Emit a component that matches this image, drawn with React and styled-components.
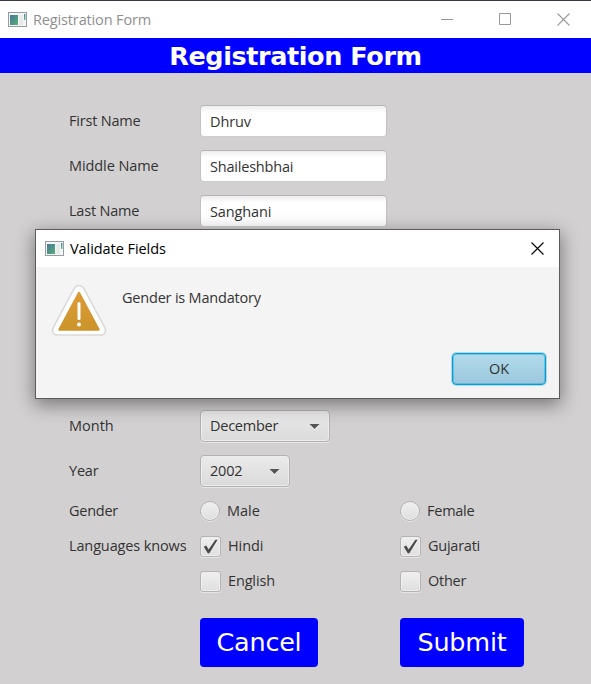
import React from 'react';
import styled, { createGlobalStyle } from 'styled-components';

const Global = createGlobalStyle`
  * { box-sizing: border-box; }
  body { margin: 0; overflow: hidden; }
`;

const Window = styled.div`
  position: relative;
  width: 591px;
  height: 684px;
  background: #d2d0d1;
  border-top: 1px solid #3b3945;
  font-family: 'Open Sans', 'Noto Sans', sans-serif;
  font-size: 14.5px;
  color: #333;
  white-space: nowrap;
`;

const TitleBar = styled.header`
  display: flex;
  align-items: center;
  height: 37px;
  padding: 0 21px 0 8px;
  background: #fff;
  color: ${(p) => (p.$active ? '#000' : '#8f8f8f')};
  svg { flex: none; display: block; }
`;

const WindowTitle = styled.span`
  margin-left: 6px;
  flex: 1;
  line-height: 20px;
  letter-spacing: ${(p) => p.$ls || 0}px;
`;

const Controls = styled.div`
  display: flex;
  gap: 45px;
`;

const Banner = styled.h1`
  height: 35px;
  margin: 0;
  padding-top: 1px;
  background: #00f;
  color: #fff;
  font: bold 25.5px/35px 'DejaVu Sans', sans-serif;
  letter-spacing: -0.42px;
  text-align: center;
`;

const Form = styled.form`
  display: grid;
  grid-template-columns: 131px 200px 1fr;
  grid-template-rows: 32px 32px 32px 157px 32px 32px 22px 22px 22px 62px;
  row-gap: 13px;
  align-items: center;
  justify-items: start;
  padding: 32px 0 0 69px;
`;

const Text = styled.span`
  line-height: 20px;
  letter-spacing: ${(p) => p.$ls || 0}px;
`;

const Label = styled(Text)`
  grid-column: 1;
`;

const Spacer = styled.div`
  grid-column: 1 / -1;
`;

const Field = styled.div`
  display: flex;
  align-items: center;
  width: 187px;
  height: 32px;
  padding: 1px 9px 0;
  border: 1px solid #c3c1c2;
  border-top-color: #b6b4b5;
  border-bottom-color: #cfcdce;
  border-radius: 4px;
  background: linear-gradient(#eee, #fff 7px);
`;

const Combo = styled.div`
  display: flex;
  align-items: center;
  justify-content: space-between;
  width: ${(p) => p.$w}px;
  height: 32px;
  padding: 0 9px 0 9px;
  border: 1px solid #b3b1b2;
  border-radius: 4px;
  background: linear-gradient(#ebebeb, #dadada);
  box-shadow: inset 0 0 0 1px #ededed, 0 1px 0 #e8e7e7;
`;

const Option = styled.label`
  display: flex;
  align-items: center;
  gap: 7px;
  height: 22px;
`;

const Box = styled.span`
  display: flex;
  align-items: center;
  justify-content: center;
  width: ${(p) => (p.$round ? 20 : 21)}px;
  height: ${(p) => (p.$round ? 20 : 21)}px;
  border: 1px solid #b5b3b4;
  border-radius: ${(p) => (p.$round ? '50%' : '3px')};
  background: linear-gradient(#efefef, #dfdfdf);
  box-shadow: inset 0 0 0 1px #efefef, 0 1px 0 #e8e7e7;
`;

const Action = styled.button`
  grid-column: ${(p) => p.$col};
  align-self: end;
  width: ${(p) => p.$w}px;
  height: 49px;
  padding: 0 0 2px;
  border: 0;
  border-radius: 4px;
  background: #00f;
  color: #fff;
  font: 25.5px/46px 'DejaVu Sans', sans-serif;
  letter-spacing: -0.25px;
`;

const Dialog = styled.section`
  position: absolute;
  left: 35px;
  top: 228px;
  width: 525px;
  height: 170px;
  border: 1px solid #5c5c5c;
  background: #f4f4f4;
  box-shadow: 0 5px 17px 1px rgba(0, 0, 0, 0.42);
  ${TitleBar} { padding: 0 15px 0 9px; }
`;

const Message = styled.div`
  display: flex;
  align-items: flex-start;
  gap: 14px;
  height: 86px;
  padding: 16px 0 0 14px;
  ${Text} { margin-top: 5px; }
`;

const Footer = styled.footer`
  display: flex;
  justify-content: flex-end;
  padding-right: 13px;
`;

const OkButton = styled.button`
  width: 94px;
  height: 32px;
  padding: 0;
  border: 1px solid #039ed3;
  border-radius: 4px;
  background: linear-gradient(#b2dcec, #9bc6dc);
  box-shadow: inset 0 0 0 1px #12a5d866, 0 0 0 1px #03a0d34d;
  color: #333;
  font: inherit;
  line-height: 28px;
`;

const AppIcon = () => (
  <svg width="19" height="16" viewBox="0 0 19 16">
    <defs>
      <linearGradient id="app-pane" x1="0" y1="0" x2="1" y2="1">
        <stop offset="0" stopColor="#4a7597" />
        <stop offset="1" stopColor="#55b076" />
      </linearGradient>
      <linearGradient id="app-side" x1="0" y1="0" x2="0" y2="1">
        <stop offset="0" stopColor="#4d7f9b" />
        <stop offset="1" stopColor="#5db58a" />
      </linearGradient>
    </defs>
    <rect x="0.5" y="0.5" width="18" height="14" fill="#f4f5f5" stroke="#969ca0" />
    <rect x="2" y="3" width="8" height="10" fill="url(#app-pane)" />
    <rect x="11.500" y="3" width="3.500" height="10" fill="#e6e9ea" />
    <rect x="16" y="2" width="1.400" height="6" fill="url(#app-side)" />
  </svg>
);

const Close = ({ color }) => (
  <svg width="13" height="13" viewBox="0 0 13 13" stroke={color} strokeWidth="1.1">
    <path d="M.5 .5l12 12M12.5 .5l-12 12" />
  </svg>
);

const Arrow = () => (
  <svg width="11" height="7" viewBox="0 0 11 7">
    <path d="M1 2h9L5.5 7z" fill="#f3f3f3" />
    <path d="M.5 1h10l-5 5z" fill="#555" />
  </svg>
);

const Tick = () => (
  <svg width="15" height="15" viewBox="0 0 15 15">
    <path d="M.8 7.800l2.400-1.200 2.400 3.800L12.400 .8h2.200L6.300 14.300H4.800z" fill="#4a4a4a" />
  </svg>
);

const Warning = () => (
  <svg width="58" height="54" viewBox="0 0 58 54">
    <defs>
      <linearGradient id="warn" x1="0" y1="0" x2="0" y2="1">
        <stop offset="0" stopColor="#dc9a36" />
        <stop offset="1" stopColor="#cc942b" />
      </linearGradient>
    </defs>
    <path
      d="M29 2.500c2.600 0 4 1.600 5.200 3.700l20.300 38c2.400 4.500.4 7.800-4.500 7.800H8c-4.900 0-6.900-3.300-4.500-7.800l20.300-38c1.200-2.100 2.600-3.700 5.200-3.700z"
      fill="#fff" stroke="#d9d9d9" strokeWidth="1.500"
    />
    <path d="M29 10l19.500 36.500H9.500z" fill="url(#warn)" stroke="url(#warn)" strokeWidth="2.400" strokeLinejoin="round" />
    <path d="M29 20.500v15" stroke="#fff" strokeWidth="3" strokeLinecap="round" />
    <circle cx="29" cy="41.500" r="2" fill="#fff" />
  </svg>
);

const Choice = ({ text, ls, round, checked }) => (
  <Option>
    <Box $round={round}>{checked && <Tick />}</Box>
    <Text $ls={ls}>{text}</Text>
  </Option>
);

export default function App() {
  return (
    <Window>
      <Global />
      <TitleBar>
        <AppIcon />
        <WindowTitle $ls={-0.14}>Registration Form</WindowTitle>
        <Controls>
          <svg width="13" height="13" stroke="#999"><path d="M0 6.500h12" /></svg>
          <svg width="13" height="13" stroke="#999" fill="none"><path d="M.5 .5h11v11H.5z" /></svg>
          <Close color="#999" />
        </Controls>
      </TitleBar>
      <Banner>Registration Form</Banner>
      <Form>
        <Label $ls={-0.2}>First Name</Label>
        <Field><Text $ls={-0.1}>Dhruv</Text></Field>
        <Label $ls={-0.08}>Middle Name</Label>
        <Field><Text $ls={-0.2}>Shaileshbhai</Text></Field>
        <Label $ls={-0.2}>Last Name</Label>
        <Field><Text $ls={-0.12}>Sanghani</Text></Field>
        <Spacer />
        <Label>Month</Label>
        <Combo $w={130}><Text $ls={-0.25}>December</Text><Arrow /></Combo>
        <Label $ls={-0.2}>Year</Label>
        <Combo $w={90}><Text $ls={-0.2}>2002</Text><Arrow /></Combo>
        <Label $ls={-0.25}>Gender</Label>
        <Choice text="Male" round />
        <Choice text="Female" ls={-0.25} round />
        <Label $ls={-0.13}>Languages knows</Label>
        <Choice text="Hindi" ls={-0.1} checked />
        <Choice text="Gujarati" ls={-0.25} checked />
        <Label />
        <Choice text="English" ls={-0.15} />
        <Choice text="Other" ls={-0.25} />
        <Action type="button" $col={2} $w={118}>Cancel</Action>
        <Action type="button" $col={3} $w={124}>Submit</Action>
      </Form>
      <Dialog role="dialog">
        <TitleBar $active>
          <AppIcon />
          <WindowTitle $ls={-0.06}>Validate Fields</WindowTitle>
          <Close color="#000" />
        </TitleBar>
        <Message>
          <Warning />
          <Text $ls={-0.2}>Gender is Mandatory</Text>
        </Message>
        <Footer><OkButton type="button">OK</OkButton></Footer>
      </Dialog>
    </Window>
  );
}
